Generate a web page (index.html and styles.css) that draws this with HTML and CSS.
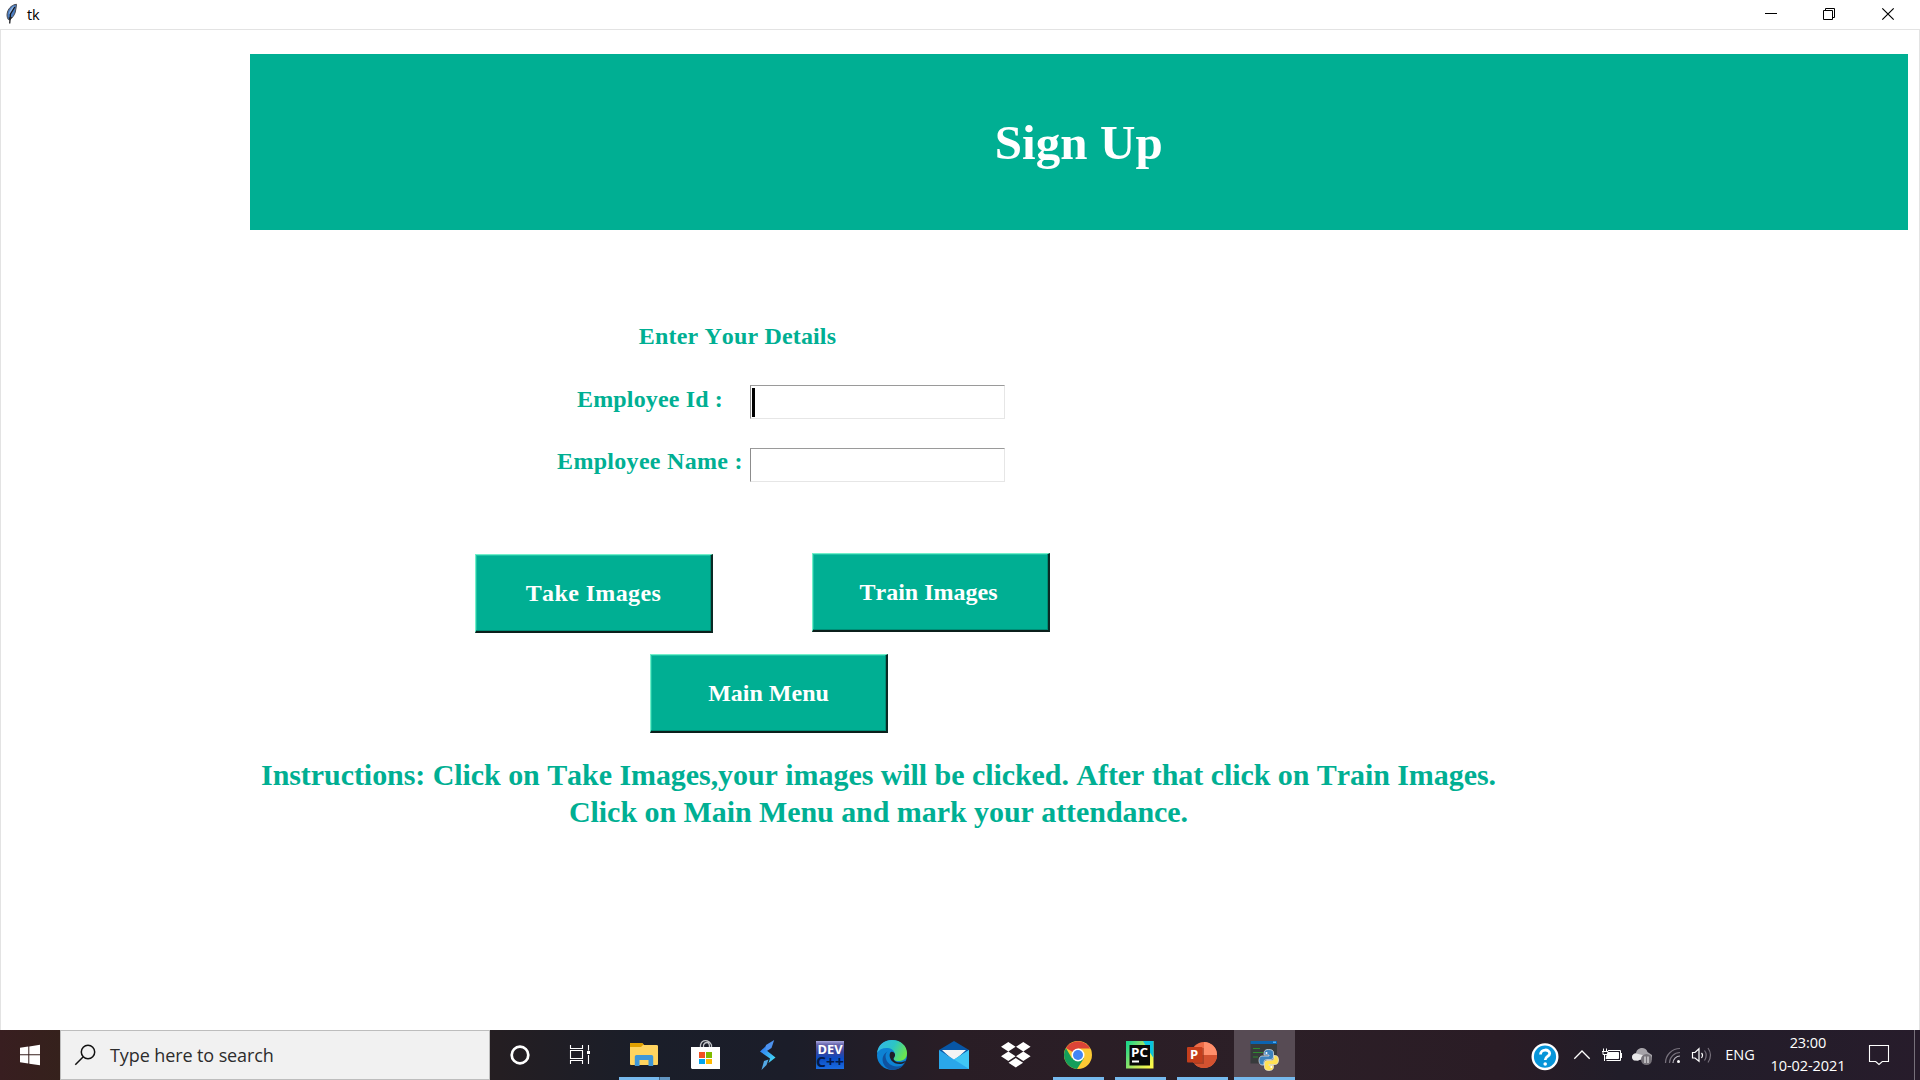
FILE: index.html
```html
<!DOCTYPE html>
<html lang="en">
<head>
<meta charset="utf-8">
<title>tk</title>
<link rel="stylesheet" href="styles.css">
</head>
<body>
<header class="titlebar">
  <svg class="feather" width="26" height="29" viewBox="0 0 26 29">
    <path d="M16.5 4.3C12.5 4.6 9 7.500 7.500 12C6.700 14.500 6.900 17.500 8.300 19.500L9.300 19.800C12.500 18 14.500 15 15.300 12C16 9.300 16.200 6.500 16.500 4.300Z" fill="#4b7dc0" stroke="#4a4a50" stroke-width="1"/>
    <path d="M14.500 6C12 7 9.500 10 8.800 14L10.500 13.500Z" fill="#8fb4e4"/>
    <path d="M14.800 7L10.500 14L9.700 23.500" fill="none" stroke="#17181c" stroke-width="1.300"/>
    <path d="M8.500 17.500L12.500 17L9.800 20.500Z" fill="#222"/>
  </svg>
  <span class="caption">tk</span>
  <svg class="controls" width="180" height="29" viewBox="1740 0 180 29" fill="none" stroke="#000">
    <path d="M1765 13.500H1777"/>
    <path d="M1825.500 10V8.500H1834.500V17.500H1833M1823.500 10.500H1832.500V19.500H1823.500Z"/>
    <path d="M1882.300 8.300L1893.700 19.700M1893.700 8.300L1882.300 19.700" stroke-width="1.200"/>
  </svg>
</header>

<main class="client">
  <h1 class="banner">Sign Up</h1>
  <form class="details">
    <h2 class="details-title">Enter Your Details</h2>
    <label class="label label-id" for="emp-id">Employee Id :</label>
    <div class="entry" id="emp-id"><span class="caret"></span></div>
    <label class="label label-name" for="emp-name">Employee Name :</label>
    <div class="entry" id="emp-name"></div>
  </form>
  <div class="actions">
    <button class="button button-take">Take Images</button>
    <button class="button button-train">Train Images</button>
  </div>
  <button class="button button-menu">Main Menu</button>
  <p class="instructions">Instructions: Click on Take Images,your images will be clicked. After that click on Train Images.<br>Click on Main Menu and mark your attendance.</p>
</main>

<footer class="taskbar">
  <svg width="60" height="50" viewBox="0 1030 60 50" fill="#fff">
    <path d="M20 1047.700L28.300 1046.500V1054.200H20ZM29.300 1046.400L40 1044.800V1054.200H29.300ZM20 1055.300H28.300V1063.500L20 1062.300ZM29.300 1055.300H40V1065.200L29.300 1063.700Z"/>
  </svg>
  <div class="search">
    <svg width="48" height="48" viewBox="61 1031 48 48" fill="none" stroke="#111" stroke-width="1.500">
      <circle cx="88" cy="1052" r="6.700"/><path d="M83.300 1056.800L75.300 1064.700"/>
    </svg>
    <span>Type here to search</span>
  </div>
  <svg width="60" height="50" viewBox="490 1030 60 50"><circle cx="520" cy="1055" r="8.300" fill="none" stroke="#fff" stroke-width="2.700"/></svg>
  <svg width="63" height="50" viewBox="550 1030 63 50" fill="none" stroke="#fff" stroke-width="1.100">
    <path d="M570.500 1045V1048.500H582.500V1045M570.500 1064V1060.500H582.500V1064M570.500 1050.500H582.500V1058.500H570.500ZM588.500 1045V1050.500M588.500 1055V1064"/><path d="M587 1051H590V1054H587Z" fill="#fff" stroke="none"/>
  </svg>
  <div class="app app-multi">
    <svg width="62" height="50" viewBox="613 1030 62 50">
      <path d="M630 1043.500Q630 1043 631 1043H642L644 1045H656.500Q658 1045 658 1046V1064Q658 1065 657 1065H631Q630 1065 630 1064Z" fill="#ffd45f"/>
      <path d="M630 1043.500Q630 1043 631 1043H642L643.800 1044.200L641 1047H630Z" fill="#e0a000"/>
      <path d="M634.800 1066V1056.500Q634.800 1055 636.500 1055H651.500Q653.200 1055 653.200 1056.500V1066H648.500V1060H639.500V1066Z" fill="#3f97d8"/>
    </svg>
  </div>
  <svg width="62" height="50" viewBox="675 1030 62 50">
    <path d="M700.500 1047V1045Q701.500 1040.700 705.500 1040.700T711.500 1045V1047M703.500 1047V1045Q704.500 1042.500 707 1042.500T709.500 1047" fill="none" stroke="#c2c4c8" stroke-width="1.300"/>
    <path d="M691 1047H720V1069H692L691 1068Z" fill="#fff"/>
    <path d="M699 1052H705V1058H699Z" fill="#f25022"/><path d="M706 1052H712V1058H706Z" fill="#7fba00"/><path d="M699 1059H705V1064H699Z" fill="#00a4ef"/><path d="M706 1059H712V1064H706Z" fill="#ffb900"/>
  </svg>
  <svg width="62" height="50" viewBox="737 1030 62 50">
    <defs><linearGradient id="bolt" x1="0" y1="0" x2="1" y2="1"><stop offset="0" stop-color="#2f6cf0"/><stop offset="1" stop-color="#45e8f5"/></linearGradient></defs>
    <path d="M774.200 1040L771.500 1048L766.500 1051.300L765 1049.500L766 1045Z" fill="#4d92ee"/>
    <path d="M760 1051.500L766 1046V1050L775.500 1057.500L768.500 1063L770 1058.500Z" fill="url(#bolt)"/>
    <path d="M764 1061L768.500 1059.500L766.500 1065L761.500 1070Z" fill="#54a9e6"/>
  </svg>
  <svg width="62" height="50" viewBox="799 1030 62 50">
    <defs><linearGradient id="dev" x1="0" y1="0" x2="0" y2="1"><stop offset="0" stop-color="#a9a9df"/><stop offset=".12" stop-color="#6967ae"/><stop offset=".4" stop-color="#39449b"/><stop offset=".62" stop-color="#0a4cc4"/><stop offset="1" stop-color="#1a6ce0"/></linearGradient></defs>
    <path d="M816 1041H844V1069H816Z" fill="url(#dev)"/>
    <text class="dev-top" x="817.500" y="1053.500" textLength="25" lengthAdjust="spacingAndGlyphs">DEV</text>
    <text class="dev-bottom" x="816" y="1067" textLength="28" lengthAdjust="spacingAndGlyphs">C++</text>
  </svg>
  <svg width="62" height="50" viewBox="861 1030 62 50">
    <defs><linearGradient id="edge" x1="0" y1=".2" x2="1" y2=".6"><stop offset="0" stop-color="#35b6e8"/><stop offset=".5" stop-color="#2cc5c5"/><stop offset="1" stop-color="#6ee64a"/></linearGradient></defs>
    <circle cx="892" cy="1055" r="15" fill="#0d82d4"/>
    <path d="M877 1053C878 1045 884 1040 892 1040C901 1040 907 1046 907 1053C907 1059 903 1061 898.500 1061C894.500 1061 893 1059.500 894 1058C896 1055 895 1049 888 1048C883 1047.500 879 1049.500 877 1053Z" fill="url(#edge)"/>
    <path d="M888.500 1051C883 1053 885 1066 897 1066.500C901 1066.500 904 1065 905.800 1062C903 1067 898 1070 892 1070C883 1069 878 1056 888.500 1051Z" fill="#0f529f"/>
    <path d="M890 1053C888 1059 894 1065 901 1064C904 1063.500 905.500 1062 906.500 1060.500C902 1063 896 1063 894 1060C892.500 1058 895.500 1057 895 1054.500C894.500 1051.500 891 1051 890 1053Z" fill="#1f1d27"/>
  </svg>
  <svg width="62" height="50" viewBox="923 1030 62 50">
    <path d="M939 1050L954 1041L969 1050V1055H939Z" fill="#0756a6"/><path d="M942 1050H966L954 1061Z" fill="#f4f4f4"/>
    <path d="M939 1050L954 1059.500L969 1050V1069H939Z" fill="#2aa7ea"/><path d="M954 1059.500L969 1050V1069Z" fill="#40c6f4"/>
  </svg>
  <svg width="62" height="50" viewBox="985 1030 62 50" fill="#fff">
    <path d="M1001 1046.700L1008.300 1042L1015.600 1046.700L1008.300 1051.400ZM1016 1046.700L1023.300 1042L1030.600 1046.700L1023.300 1051.400ZM1001 1056.300L1008.300 1051.600L1015.600 1056.300L1008.300 1061ZM1016 1056.300L1023.300 1051.600L1030.600 1056.300L1023.300 1061ZM1008.500 1062.700L1015.800 1058L1023.100 1062.700L1015.800 1067.500Z"/>
  </svg>
  <div class="app app-open">
    <svg width="62" height="50" viewBox="1047 1030 62 50">
      <circle cx="1078" cy="1055" r="14" fill="#fcc934"/>
      <path d="M1078 1055L1065.900 1048A14 14 0 0 1 1090.100 1048.500H1078Z" fill="#db4437"/>
      <path d="M1065.900 1048A14 14 0 0 0 1077 1069L1083.800 1058.500L1078 1055L1072 1058.500Z" fill="#149e5a"/>
      <circle cx="1078" cy="1055" r="6.500" fill="#fff"/><circle cx="1078" cy="1055" r="5" fill="#4285f4"/>
    </svg>
  </div>
  <div class="app app-open">
    <svg width="62" height="50" viewBox="1109 1030 62 50">
      <defs><linearGradient id="pyc" x1="0" y1=".2" x2="1" y2=".8"><stop offset="0" stop-color="#21d789"/><stop offset=".55" stop-color="#bde85a"/><stop offset="1" stop-color="#fcf84a"/></linearGradient></defs>
      <path d="M1126 1041H1153.500V1068.500H1126Z" fill="url(#pyc)"/><path d="M1143 1041H1153.500V1058L1147 1048Z" fill="#08c3df"/>
      <path d="M1129.500 1045H1150V1065.500H1129.500Z" fill="#080808"/>
      <text class="pc" x="1131" y="1056.500" textLength="17" lengthAdjust="spacingAndGlyphs">PC</text>
      <path d="M1132 1060.500H1139V1062.500H1132Z" fill="#fff"/>
    </svg>
  </div>
  <div class="app app-open">
    <svg width="62" height="50" viewBox="1171 1030 62 50">
      <circle cx="1204" cy="1055" r="13" fill="#ed6c47"/><path d="M1204 1055V1042A13 13 0 0 1 1217 1055Z" fill="#ff8f6b"/><path d="M1191 1055H1217A13 13 0 0 1 1191 1055Z" fill="#d35230"/>
      <path d="M1191 1048H1204V1064H1194Z" fill="#000" opacity=".2"/>
      <rect x="1187" y="1047" width="15.500" height="15.500" rx="1" fill="#c43e1c"/>
      <text class="ppt" x="1190" y="1059.300">P</text>
    </svg>
  </div>
  <div class="app app-active">
    <svg width="62" height="50" viewBox="1234 1030 62 50">
      <path d="M1250.500 1041H1277V1063.500H1250.500Z" fill="#383b3c"/><path d="M1250.500 1041H1277V1044H1250.500Z" fill="#0b63b0"/><path d="M1273 1041.500H1276V1043H1273Z" fill="#4dabf0"/>
      <path d="M1253 1048.500H1260M1253 1052.500H1263M1253 1057H1258" stroke="#2f8a2f" fill="none"/>
      <path d="M1268.500 1049.500C1264 1049.500 1264 1052 1264 1055H1269V1056H1262C1258 1056 1258 1065 1262 1065H1264V1062Q1264 1059.500 1267 1059.500H1271Q1273.500 1059.500 1273.500 1057V1053C1273.500 1050.500 1272 1049.500 1268.500 1049.500Z" fill="#3c82bd" stroke="#e8edf0" stroke-width=".7"/>
      <path d="M1269 1070.500C1273.500 1070.500 1273.500 1068 1273.500 1065.500H1269V1064.500H1275.500C1279.500 1064.500 1279.500 1055.500 1275.500 1055.500H1274V1058Q1274 1060.500 1271 1060.500H1267Q1264.500 1060.500 1264.500 1063V1067C1264.500 1069.500 1266 1070.500 1269 1070.500Z" fill="#ffe052" stroke="#f2f0e0" stroke-width=".7"/>
      <circle cx="1266.500" cy="1053" r="1" fill="#fff"/><circle cx="1271.300" cy="1067" r="1" fill="#fff"/>
    </svg>
  </div>
  <div class="tray">
    <svg width="30" height="50" viewBox="1530 1030 30 50"><circle cx="1545" cy="1056.700" r="12.300" fill="#0795d9" stroke="#fff" stroke-width="2.400"/><path d="M1540.500 1054.500C1540.500 1048.700 1549.700 1048.700 1549.700 1053.500C1549.700 1056.500 1545.200 1056.500 1545.200 1060" fill="none" stroke="#fff" stroke-width="2.800"/><circle cx="1545.200" cy="1064" r="1.800" fill="#fff"/></svg>
    <svg width="40" height="50" viewBox="1560 1030 40 50"><path d="M1574.300 1058.700L1582 1051L1589.700 1058.700" fill="none" stroke="#fff" stroke-width="1.300"/></svg>
    <svg width="26" height="50" viewBox="1600 1030 26 50" fill="none" stroke="#fff"><path d="M1608 1050.500H1620.500V1060.500H1606.500M1621.500 1053V1058"/><path d="M1608 1052.500H1618.500V1058.500H1606Z" fill="#fff"/><path d="M1603.500 1048.500V1051M1606.500 1048.500V1051M1602 1051.500H1608V1054.500H1603V1052M1604.500 1055V1061"/></svg>
    <svg width="32" height="50" viewBox="1626 1030 32 50"><path d="M1636 1060C1631 1060 1631 1053.500 1636 1053C1637 1047 1646 1046 1647.500 1052L1652 1055V1060Z" fill="#a6a3a9"/><path d="M1634 1060.500C1631 1059 1631 1053.500 1636.500 1053.500L1646 1056L1638 1060.800Z" fill="#e9e8ea"/><circle cx="1646.500" cy="1059.500" r="5.500" fill="#77737a"/><path d="M1645 1056.500V1063M1648 1056.500V1063" stroke="#fff"/></svg>
    <svg width="28" height="50" viewBox="1658 1030 28 50" fill="none" stroke="#77717c" stroke-width="1.200"><path d="M1665.500 1063A14.500 14.500 0 0 1 1680 1048.500"/><path d="M1669.500 1063A10.500 10.500 0 0 1 1680 1052.500"/><path d="M1673 1063A7 7 0 0 1 1680 1056" stroke="#bbb6bf"/><circle cx="1678.500" cy="1061.500" r="1.500" fill="#fff" stroke="none"/></svg>
    <svg width="30" height="50" viewBox="1686 1030 30 50" fill="none" stroke="#fff" stroke-width="1.200"><path d="M1692.500 1052.500H1695L1699 1048.700V1061.300L1695 1058H1692.500Z"/><path d="M1701.500 1053Q1703.500 1055 1701.500 1058"/><path d="M1704.500 1050.500Q1708 1055 1704.500 1060.500M1708 1048Q1713 1055 1708 1062.500" stroke="#77717c"/></svg>
    <span class="language">ENG</span>
    <div class="clock"><span>23:00</span><span>10-02-2021</span></div>
    <svg width="62" height="50" viewBox="1852 1030 62 50" fill="none" stroke="#fff" stroke-width="1.100"><path d="M1869.500 1045.500H1888.500V1061.500H1882.300L1879 1064.500L1875.700 1061.500H1869.500Z"/></svg>
    <div class="show-desktop"></div>
  </div>
</footer>
</body>
</html>
```
FILE: styles.css
```css
* { box-sizing: border-box; }

body {
  margin: 0;
  width: 1920px;
  height: 1080px;
  overflow: hidden;
  display: flex;
  flex-direction: column;
  background: #fff;
  font-family: "Liberation Serif", serif;
  font-kerning: none;
}

svg { display: block; flex: none; }

.titlebar {
  display: flex;
  flex: none;
  height: 30px;
  border-bottom: 1px solid #e3e3e3;
  font-family: "Open Sans", sans-serif;
}
.caption { padding-left: 1px; font-size: 14.5px; line-height: 29px; letter-spacing: -0.2px; color: #000; }
.controls { margin-left: auto; }

.client {
  flex: none;
  height: 1000px;
  border: solid #e3e3e3;
  border-width: 0 1px;
  font-weight: bold;
  color: #00af93;
}

.banner {
  margin: 24px 0 0 249px;
  width: 1657.5px;
  height: 176px;
  padding-top: 2px;
  background: #00af93;
  color: #fff;
  font-size: 49px;
  line-height: 174px;
  letter-spacing: 0.1px;
  text-align: center;
}

.details {
  display: grid;
  grid-template-columns: 200px 255px;
  grid-template-rows: 35px 34px 34px;
  row-gap: 29px;
  margin: 91px 0 0 549px;
  font-size: 24px;
}
.details-title {
  grid-column: 1 / 3;
  width: 375px;
  margin: 0;
  font-size: 24px;
  line-height: 30px;
  text-align: center;
  letter-spacing: 0.15px;
}
.label { line-height: 28px; text-align: center; white-space: nowrap; }
.label-id { letter-spacing: 0.15px; }
.label-name { line-height: 27px; letter-spacing: 0.3px; }
.entry {
  height: 34px;
  padding: 2px 0 0 1px;
  border: 1px solid #e6e6e6;
  border-top: 1.5px solid #9a9a9a;
  border-left: 1px solid #8c8c8c;
}
.caret { display: block; width: 2.500px; height: 29px; background: #000; }

.actions {
  display: flex;
  gap: 99px;
  height: 80px;
  margin: 71px 0 0 474px;
}
.button {
  display: block;
  width: 238px;
  height: 79px;
  padding: 1px 0 0;
  border: solid;
  border-width: 1px 2px 2px 1px;
  border-color: #72efca #0b2a25 #0b1f1b #72efca;
  box-shadow: inset -1px -1px #008d76, inset 1px 1px #1fc5a6;
  background: #00af93;
  color: #fff;
  font: bold 24px/75px "Liberation Serif", serif;
  font-kerning: none;
  text-align: center;
  white-space: nowrap;
}
.button-take { margin-top: 1px; letter-spacing: 0.38px; }
.button-train { padding-right: 4px; }
.button-menu { margin: 21px 0 0 649px; }

.instructions {
  width: 1238px;
  margin: 22.5px 0 0 258.5px;
  font-size: 30px;
  line-height: 37.5px;
  letter-spacing: -0.06px;
  text-align: center;
  white-space: nowrap;
}

.taskbar {
  display: flex;
  flex: none;
  height: 50px;
  background: linear-gradient(90deg, #381e20 0, #35211c 60px, #241e22 500px, #1a1e29 640px, #1b1d29 790px, #291d25 950px, #2c1f27 1250px, #2a1c25 1500px, #211d29 1620px, #271c2b 1920px);
  color: #fff;
  font-family: "Open Sans", sans-serif;
}
.search {
  display: flex;
  flex: none;
  width: 430px;
  border: 1px solid #bdbdbd;
  background: #f1f1f1;
  color: #2c2c2c;
  font-size: 18px;
  line-height: 49px;
  letter-spacing: -0.1px;
  white-space: nowrap;
}
.search span { padding-left: 1px; }
.app { flex: none; width: 62px; height: 50px; }
.app-open { background: linear-gradient(#76b9ed, #76b9ed) 6px 47px / 51px 3px no-repeat; }
.app-multi {
  background:
    linear-gradient(90deg, #76b9ed 40px, #3f6688 40px, #3f6688 41px, #6296c2 41px) 6px 47px / 51px 3px no-repeat;
}
.app-active {
  width: 61px;
  margin-left: 1px;
  background: #574b54;
  border-bottom: 3px solid #76b9ed;
}
.dev-top { font: bold 12.5px "Open Sans", sans-serif; fill: #fff; }
.dev-bottom { font: bold 13.5px "Open Sans", sans-serif; fill: #041a48; }
.pc { font: bold 12px "Open Sans", sans-serif; fill: #fff; }
.ppt { font: bold 13px "Open Sans", sans-serif; fill: #fff; }

.tray { display: flex; margin-left: auto; font-size: 14.5px; letter-spacing: -0.05px; }
.language { width: 48px; line-height: 50px; text-align: center; }
.clock {
  display: flex;
  flex-direction: column;
  width: 88px;
  padding-top: 2px;
  line-height: 22.5px;
  text-align: center;
}
.show-desktop { width: 6px; border-left: 1px solid #77707a; }
```
